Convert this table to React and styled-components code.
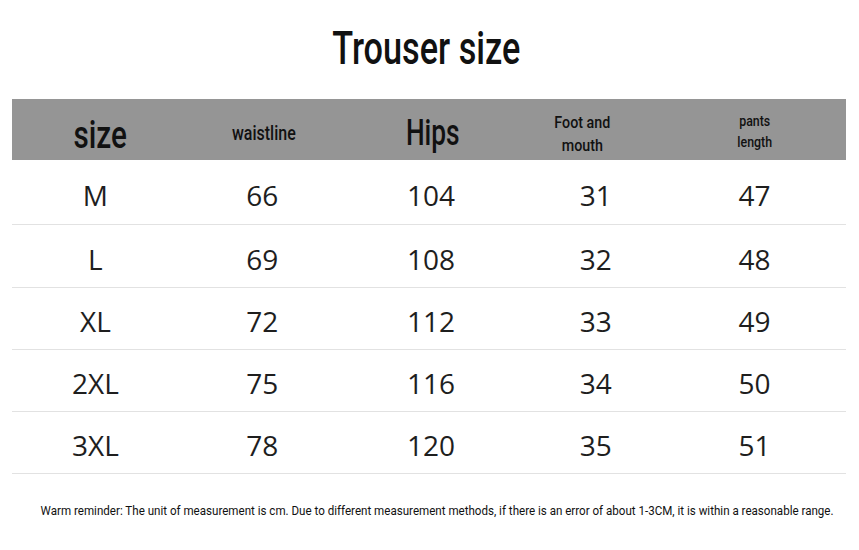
import React from "react";
import styled, { createGlobalStyle } from "styled-components";

const Global = createGlobalStyle`
  html, body { margin: 0; padding: 0; background: #fff; }
  body { width: 859px; height: 550px; overflow: hidden; }
`;

const Page = styled.div`
  width: 859px;
  height: 550px;
  display: flex;
  flex-direction: column;
  align-items: center;
  background: #fff;
`;

const Condensed = styled.span`
  display: inline-block;
  font-family: Roboto, "Liberation Sans", sans-serif;
  font-weight: ${(p) => p.$weight || 500};
  font-size: ${(p) => p.$size}px;
  line-height: ${(p) => p.$lh || 1.2};
  color: #111;
  transform: scaleX(${(p) => p.$sx || 0.75});
  transform-origin: center;
  white-space: nowrap;
  text-align: center;
`;

const Title = styled.h1`
  margin: 0;
  height: 99px;
  display: flex;
  align-items: center;
  justify-content: center;
  padding-bottom: 2px;
  box-sizing: border-box;
  transform: translateX(-3px);
`;

const Table = styled.div`
  width: 834px;
  margin-left: -1px;
  display: flex;
  flex-direction: column;
`;

const HeaderRow = styled.div`
  display: grid;
  grid-template-columns: repeat(5, 1fr);
  height: 61px;
  background: #959595;
  align-items: center;
`;

const Row = styled.div`
  display: grid;
  grid-template-columns: repeat(5, 1fr);
  height: ${(p) => p.$h}px;
  align-items: center;
  border-bottom: 1px solid #e2e2e2;
  box-sizing: border-box;
`;

const Cell = styled.div`
  display: flex;
  justify-content: center;
  align-items: center;
  transform: translate(${(p) => p.$dx || 0}px, ${(p) => p.$dy || 0}px);
`;

const Value = styled.span`
  font-family: "Open Sans", sans-serif;
  font-weight: 500;
  font-size: 28px;
  color: #1e1e1e;
  padding-top: 5px;
`;

const Note = styled.div`
  margin-top: 28px;
  width: 859px;
  display: flex;
  justify-content: center;
  transform: translateX(8px);
`;

const rows = [
  ["M", "66", "104", "31", "47"],
  ["L", "69", "108", "32", "48"],
  ["XL", "72", "112", "33", "49"],
  ["2XL", "75", "116", "34", "50"],
  ["3XL", "78", "120", "35", "51"],
];

const heights = [65, 63, 62, 62, 62];
const dx = [0, 0, 2, 0, -8];

export default function App() {
  return (
    <Page>
      <Global />
      <Title>
        <Condensed $size={46} $sx={0.745}>Trouser size</Condensed>
      </Title>
      <Table>
        <HeaderRow>
          <Cell $dx={5} $dy={6}>
            <Condensed $size={38} $sx={0.78}>size</Condensed>
          </Cell>
          <Cell $dx={2} $dy={4}>
            <Condensed $size={20.5} $sx={0.78}>waistline</Condensed>
          </Cell>
          <Cell $dx={4} $dy={4}>
            <Condensed $size={36} $sx={0.73}>Hips</Condensed>
          </Cell>
          <Cell $dx={-14} $dy={4}>
            <Condensed $size={17} $sx={0.84} $lh={1.3}>
              Foot and
              <br />
              mouth
            </Condensed>
          </Cell>
          <Cell $dx={-8} $dy={2}>
            <Condensed $size={15.5} $sx={0.8} $lh={1.35}>
              pants
              <br />
              length
            </Condensed>
          </Cell>
        </HeaderRow>
        {rows.map((r, ri) => (
          <Row key={r[0]} $h={heights[ri]}>
            {r.map((v, i) => (
              <Cell key={i} $dx={dx[i]}>
                <Value>{v}</Value>
              </Cell>
            ))}
          </Row>
        ))}
      </Table>
      <Note>
        <Condensed $size={13.5} $sx={0.858} $weight={400}>
          Warm reminder: The unit of measurement is cm. Due to different measurement methods, if there is an error of about 1-3CM, it is within a reasonable range.
        </Condensed>
      </Note>
    </Page>
  );
}
